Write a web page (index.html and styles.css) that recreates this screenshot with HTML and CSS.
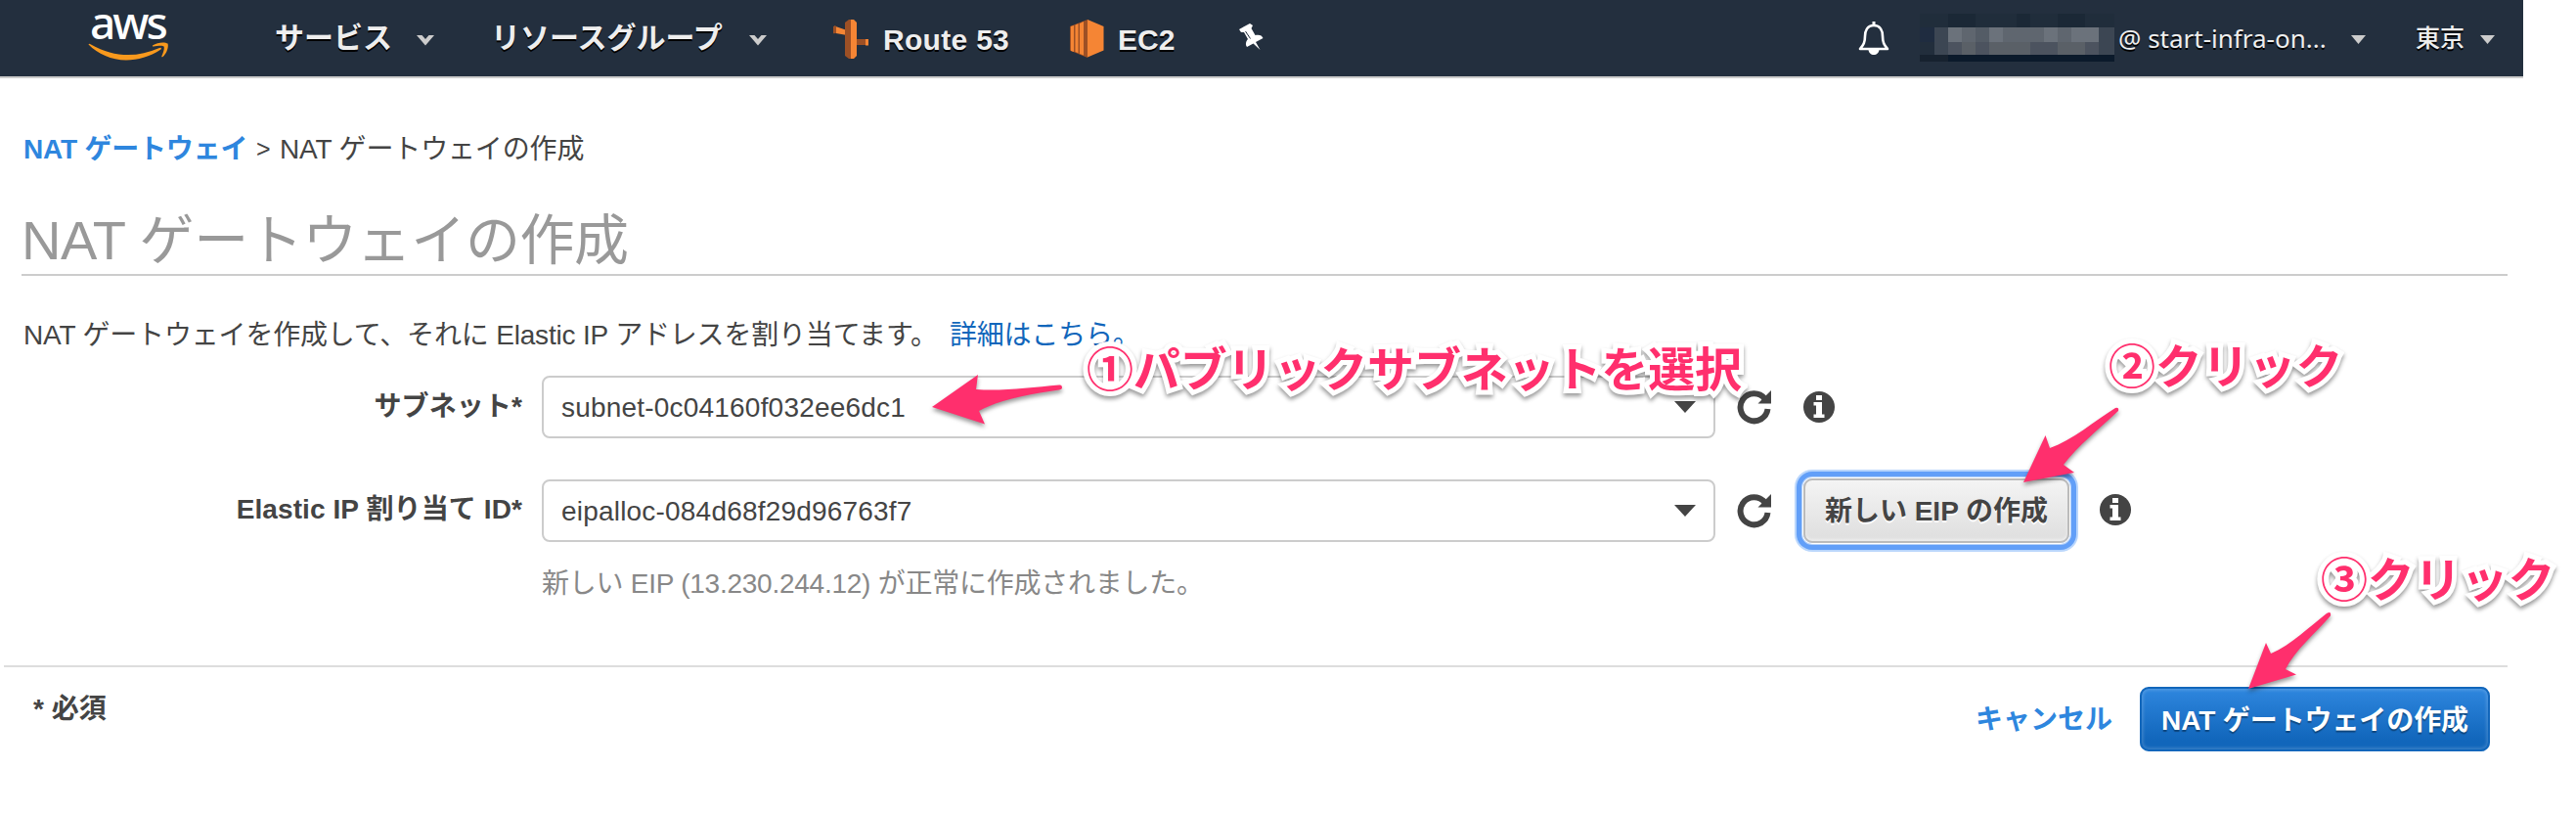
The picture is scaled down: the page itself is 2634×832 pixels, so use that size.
FILE: index.html
```html
<!DOCTYPE html>
<html lang="ja">
<head>
<meta charset="utf-8">
<title>NAT ゲートウェイの作成</title>
<link rel="stylesheet" href="styles.css">
</head>
<body>
<header class="nav">
  <a class="logo">
    <span class="logo-text">aws</span>
    <svg class="smile" width="84" height="20" viewBox="0 0 84 20"><path d="M.5 2.5Q1 1 3 2.5C27 16 50 16 73 6q3-1 1.500 1.500C63 15 51 18.500 39 18.500 24 18.500 10 12 .5 2.500z" fill="#f8991d"/><path d="M66 3.500C71-.2 79-.2 81.500 1.500c1.200 3-1 10.500-5 13.500-1 .5-1.500 0-1-1 1.500-3.500 3-8 2-9.500S70 4 67 4.500q-1.500 0-1-1z" fill="#f8991d"/></svg>
  </a>
  <a class="item services">サービス</a>
  <svg class="chev" width="18" height="11" viewBox="0 0 18 11"><path d="M0 0h5.500L9 4l3.500-4H18L9 10.500z" fill="#ccc"/></svg>
  <a class="item groups">リソースグループ</a>
  <svg class="chev" width="18" height="11" viewBox="0 0 18 11"><path d="M0 0h5.500L9 4l3.500-4H18L9 10.500z" fill="#ccc"/></svg>
  <svg class="r53" width="36" height="40" viewBox="0 0 36 40"><path d="M1 6.500L14 11v5L0 13.500z" fill="#f58534"/><path d="M0 7l3-.5V14l-3 .2z" fill="#9d5025"/><path d="M21 20h12v6H21z" fill="#9d5025"/><path d="M33 20h3v6.500h-3z" fill="#f58534"/><path d="M12 3l4-3h4v40h-4l-4-3z" fill="#9d5025"/><path d="M18 0h3l3 3v34l-3 3h-3z" fill="#f58534"/></svg>
  <a class="item route">Route 53</a>
  <svg class="ec2i" width="35" height="39" viewBox="0 0 35 39"><path d="M0 7l18-7v39L0 31.500z" fill="#9d5025"/><path d="M18 0l16.500 7v24.500L18 38.500z" fill="#f58534"/><path d="M1 7l3-1v27l-3-1zM5.500 5.500l3-1.200v30l-3-1.200zM10 4l4-2v34.500l-4-1.500z" fill="#f58534"/></svg>
  <a class="item ec2">EC2</a>
  <svg class="pin" width="25" height="28" viewBox="0 0 25 28"><path d="M0 6L11 0l3 2-1.500 3 4 7c4-1 7 0 8 3L17 19l4.500 8-7-6.500L8 24c-2-2-1-6 1-8L5 9 2 9z" fill="#fff"/><path d="M6.500 8l5 7.500" stroke="#232f3e" stroke-width="1"/></svg>
  <span class="grow"></span>
  <svg class="bell" width="32" height="35" viewBox="0 0 32 35"><path d="M16 4c7 0 9 6 9 11 0 7 2 9 5 13H2c3-4 5-6 5-13C7 10 9 4 16 4z" fill="none" stroke="#fff" stroke-width="2.600" stroke-linejoin="round"/><path d="M14.500 0h3v5h-3zM10.500 28h11c0 8-11 8-11 0z" fill="#fff"/></svg>
  <svg class="mosaic" width="199" height="49" viewBox="0 0 199 49" shape-rendering="crispEdges">
    <path fill="#202d3b" d="M0 0h199v14H0z"/><path fill="#1b2836" d="M29 0h28v14H29zM99 0h14v14H99zM141 0h28v14h-28z"/>
    <path fill="#1f2c40" d="M0 14h15v15H0z"/><path fill="#3c4653" d="M15 14h14v28H15zM183 14h16v28h-16z"/>
    <path fill="#5f666f" d="M29 14h154v15H29z"/><path fill="#6b727b" d="M29 14h14v15H29zM71 14h14v15H71zM127 14h14v15h-14zM155 14h28v15h-28z"/><path fill="#545c66" d="M57 14h14v15H57z"/>
    <path fill="#222e3c" d="M0 29h15v13H0z"/><path fill="#4c535f" d="M29 29h154v13H29z"/><path fill="#5a6067" d="M43 29h14v13H43zM71 29h42v13H71zM141 29h28v13h-28z"/>
    <path fill="#0b1a2b" d="M0 42h199v7H0z"/><path fill="#17222f" d="M0 42h29v7H0z"/>
  </svg>
  <a class="item user">@ start-infra-on...</a>
  <svg class="tri" width="15" height="9" viewBox="0 0 15 9"><path d="M0 0h15L7.500 9z" fill="#ccc"/></svg>
  <a class="item region">東京</a>
  <svg class="tri" width="15" height="9" viewBox="0 0 15 9"><path d="M0 0h15L7.500 9z" fill="#ccc"/></svg>
</header>

<main class="main">
  <nav class="crumb"><a class="crumb-link">NAT ゲートウェイ</a><span class="crumb-sep">&gt;</span><span class="crumb-now">NAT ゲートウェイの作成</span></nav>
  <h1 class="title">NAT ゲートウェイの作成</h1>
  <p class="desc"><span class="desc-text">NAT ゲートウェイを作成して、それに Elastic IP アドレスを割り当てます。</span><a class="more">詳細はこちら。</a></p>

  <div class="row">
    <label class="label label-subnet">サブネット*</label>
    <div class="select"><span class="value">subnet-0c04160f032ee6dc1</span><svg width="22" height="12" viewBox="0 0 22 12"><path d="M0 0h22L11 12z" fill="#444"/></svg></div>
    <svg class="refresh" width="36" height="36" viewBox="0 0 36 36"><path d="M28.500 9.500A14 14 0 1 0 31.500 20" fill="none" stroke="#444" stroke-width="6"/><path d="M35 1v13.500H21.500z" fill="#444"/></svg>
    <svg class="info" width="32" height="32" viewBox="0 0 32 32"><circle cx="16" cy="16" r="16" fill="#444"/><path d="M13 4h6v5h-6zM10.500 11H19v12.500h2.500V27h-11v-3.500H13v-9h-2.500z" fill="#fff"/></svg>
  </div>
  <div class="row second">
    <label class="label">Elastic IP 割り当て ID*</label>
    <div class="select"><span class="value">eipalloc-084d68f29d96763f7</span><svg width="22" height="12" viewBox="0 0 22 12"><path d="M0 0h22L11 12z" fill="#444"/></svg></div>
    <svg class="refresh" width="36" height="36" viewBox="0 0 36 36"><path d="M28.500 9.500A14 14 0 1 0 31.500 20" fill="none" stroke="#444" stroke-width="6"/><path d="M35 1v13.500H21.500z" fill="#444"/></svg>
    <button class="btn-eip">新しい EIP の作成</button>
    <svg class="info" width="32" height="32" viewBox="0 0 32 32"><circle cx="16" cy="16" r="16" fill="#444"/><path d="M13 4h6v5h-6zM10.500 11H19v12.500h2.500V27h-11v-3.500H13v-9h-2.500z" fill="#fff"/></svg>
  </div>
  <p class="help">新しい EIP (13.230.244.12) が正常に作成されました。</p>
</main>

<footer class="foot">
  <span class="required">* 必須</span>
  <a class="cancel">キャンセル</a>
  <button class="btn-create">NAT ゲートウェイの作成</button>
</footer>

<div class="note note-1">①パブリックサブネットを選択</div>
<div class="note note-2">②クリック</div>
<div class="note note-3">③クリック</div>
<svg class="arrows" width="2634" height="832" viewBox="0 0 2634 832" fill="#ff2f6d">
  <path d="M953 416L1000 383L998 398C1025 400 1054 396 1083 393.500Q1086 393 1086 396.500Q1086 398 1083 398.500C1054 403 1022 408 1001 420L1007 433.500z"/>
  <path d="M2069 493L2091.500 445L2096 458C2119 450 2142 430 2163 417Q2167 416 2166 420C2147 438 2124 456 2110 475L2121 483z"/>
  <path d="M2299 704L2317 657L2322 668C2343 659 2362 640 2379 627Q2384 624 2383 629.500C2367 648 2347 664 2337 684L2348 689.500z"/>
</svg>
</body>
</html>
```

FILE: styles.css
```css
body {
  margin: 0;
  width: 2634px;
  height: 832px;
  position: relative;
  overflow: hidden;
  background: #fff;
  color: #444;
  font-family: "Liberation Sans", "Noto Sans CJK JP", sans-serif;
  font-size: 28px;
}
p, h1 { margin: 0; }
svg { display: block; flex: none; }
button { margin: 0; padding: 0; font: inherit; white-space: nowrap; box-sizing: border-box; }

.nav {
  display: flex;
  align-items: flex-start;
  box-sizing: border-box;
  width: 2580px;
  height: 80px;
  background: #232f3e;
  border-bottom: 2px solid #ccc;
}
.logo { width: 84px; margin-left: 90px; }
.logo-text {
  display: block;
  height: 43px;
  line-height: 44px;
  padding-left: 2px;
  font-family: "Noto Sans", sans-serif;
  font-weight: 500;
  font-size: 46px;
  letter-spacing: -3px;
  color: #fff;
}
.item {
  flex: none;
  height: 78px;
  line-height: 78px;
  white-space: nowrap;
  color: #eee;
  font-size: 30px;
  font-weight: bold;
  text-shadow: 0 2px 0 #000;
}
.services { width: 120px; margin-left: 107px; }
.chev { margin: 36px 0 0 25px; }
.groups { width: 240px; margin-left: 58px; }
.groups + .chev { margin-left: 24px; }
.r53 { margin: 20px 0 0 68px; }
.route { width: 130px; margin: 2px 0 0 15px; letter-spacing: .3px; }
.ec2i { margin: 20px 0 0 61px; }
.ec2 { width: 60px; margin: 2px 0 0 14px; }
.pin { margin: 24px 0 0 64px; }
.grow { flex: 1; }
.bell { margin: 22px 31px 0 0; }
.mosaic { margin-top: 14px; }
.user {
  width: 216px;
  margin-left: 4px;
  font-family: "Noto Sans", sans-serif;
  font-size: 26px;
  font-weight: normal;
}
.tri { margin: 36px 0 0 22px; }
.region { width: 50px; margin-left: 51px; font-size: 25px; font-weight: 500; }
.region + .tri { margin: 36px 29px 0 16px; }

.main { padding: 0 70px 0 22px; height: 600px; }
.crumb { display: flex; height: 40px; line-height: 41px; padding: 52px 0 0 2px; white-space: nowrap; }
.crumb-link { width: 238px; color: #2e86de; font-weight: bold; letter-spacing: -.2px; }
.crumb-sep { width: 24px; font-size: 25px; }
.crumb-now { letter-spacing: -.15px; }
.title {
  box-sizing: border-box;
  height: 110px;
  padding-top: 39px;
  line-height: 70px;
  border-bottom: 2px solid #ccc;
  color: #999;
  font-size: 56px;
  font-weight: normal;
  letter-spacing: -.45px;
  white-space: nowrap;
}
.desc { display: flex; height: 40px; line-height: 41px; padding: 40px 0 22px 2px; white-space: nowrap; }
.desc-text { width: 947px; letter-spacing: -.18px; }
.more { color: #1166bb; letter-spacing: -.2px; }
.row { display: flex; height: 64px; align-items: center; }
.second { margin-top: 42px; }
.label { width: 512px; margin-right: 20px; text-align: right; font-weight: bold; line-height: 60px; padding-bottom: 2px; white-space: nowrap; letter-spacing: .1px; }
.label-subnet { padding-bottom: 0; }
.select {
  display: flex;
  align-items: center;
  justify-content: space-between;
  box-sizing: border-box;
  width: 1200px;
  height: 64px;
  padding: 0 18px;
  border: 2px solid #ccc;
  border-radius: 8px;
}
.value { letter-spacing: .2px; padding-top: 1px; }
.refresh { margin-left: 22px; }
.info { margin-left: 32px; }
.btn-eip {
  width: 272px;
  height: 66px;
  margin-left: 32px;
  padding-bottom: 4px;
  border: 2px solid #bbb;
  border-radius: 9px;
  background: linear-gradient(#f4f4f4, #dedede);
  box-shadow: inset 0 -2px 3px #eee, 0 0 0 1px #fff, 0 0 0 2px #b5d2fb, 0 0 0 7px #629ff8, 0 0 0 9px #b9d6fc;
  color: #444;
  font-weight: bold;
  text-shadow: 0 2px 0 #fff;
}
.btn-eip + .info { margin-left: 31px; margin-bottom: 3px; }
.help { margin-top: 21px; padding-left: 532px; line-height: 44px; color: #888; letter-spacing: -.25px; white-space: nowrap; }

.foot {
  display: flex;
  box-sizing: border-box;
  width: 2560px;
  height: 90px;
  margin-left: 4px;
  padding: 20px 18px 0 30px;
  border-top: 2px solid #ddd;
}
.required { flex: 1; font-weight: bold; line-height: 46px; }
.cancel { width: 168px; line-height: 68px; color: #2e86de; font-weight: bold; white-space: nowrap; }
.btn-create {
  width: 358px;
  height: 66px;
  padding-bottom: 2px;
  border: 2px solid #1166bb;
  border-radius: 9px;
  background: linear-gradient(#2e86de, #1166bb 85%);
  box-shadow: inset 0 0 3px 2px rgba(255,255,255,.15);
  color: #fff;
  font-weight: bold;
  letter-spacing: -.1px;
  text-shadow: 0 2px 1px rgba(0,0,0,.35);
}

.note {
  position: absolute;
  font: bold 48px/60px "Noto Sans CJK JP", sans-serif;
  letter-spacing: -.15px;
  color: #ff2f6d;
  white-space: nowrap;
  -webkit-text-stroke: 10px #fff;
  paint-order: stroke fill;
  filter: drop-shadow(0 3px 2px rgba(0,0,0,.4));
}
.note-1 { left: 1111px; top: 344px; }
.note-2 { left: 2156px; top: 341px; }
.note-3 { left: 2373px; top: 559px; }
.arrows { position: absolute; left: 0; top: 0; filter: drop-shadow(0 3px 2px rgba(0,0,0,.4)); }
```
